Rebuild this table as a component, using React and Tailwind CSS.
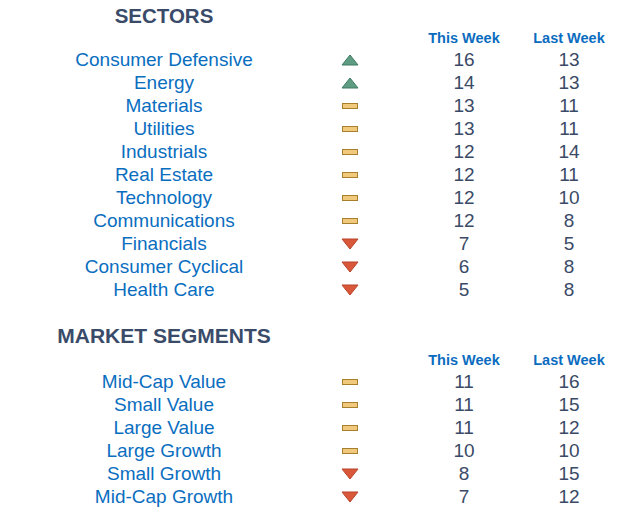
import React from "react";

const sectors = [
  ["Consumer Defensive", "up", 16, 13],
  ["Energy", "up", 14, 13],
  ["Materials", "flat", 13, 11],
  ["Utilities", "flat", 13, 11],
  ["Industrials", "flat", 12, 14],
  ["Real Estate", "flat", 12, 11],
  ["Technology", "flat", 12, 10],
  ["Communications", "flat", 12, 8],
  ["Financials", "down", 7, 5],
  ["Consumer Cyclical", "down", 6, 8],
  ["Health Care", "down", 5, 8],
];

const segments = [
  ["Mid-Cap Value", "flat", 11, 16],
  ["Small Value", "flat", 11, 15],
  ["Large Value", "flat", 11, 12],
  ["Large Growth", "flat", 10, 10],
  ["Small Growth", "down", 8, 15],
  ["Mid-Cap Growth", "down", 7, 12],
];

function Icon({ kind }) {
  if (kind === "up")
    return (
      <svg width="18" height="12" viewBox="0 0 18 12">
        <polygon points="9,1 17,11 1,11" fill="#5f9c84" stroke="#3f7a62" strokeWidth="1" strokeLinejoin="round" />
      </svg>
    );
  if (kind === "down")
    return (
      <svg width="18" height="12" viewBox="0 0 18 12">
        <polygon points="1,1 17,1 9,11" fill="#d9583a" stroke="#b8432a" strokeWidth="1" strokeLinejoin="round" />
      </svg>
    );
  return (
    <svg width="18" height="12" viewBox="0 0 18 12">
      <rect x="1.5" y="3.5" width="15" height="5" fill="#f0c97c" stroke="#a87f2c" strokeWidth="1" />
    </svg>
  );
}

function Section({ title, rows, titleClass }) {
  return (
    <div className="flex flex-col">
      <div className="grid grid-cols-[328px_84px_104px_106px]">
        <div className={`text-center font-bold text-[#3a4b6a] ${titleClass}`}>{title}</div>
      </div>
      <div className="grid grid-cols-[328px_84px_104px_106px] h-[19px] leading-[19px] text-[14.5px] font-bold text-[#0b6cbf]">
        <div />
        <div />
        <div className="text-center">This Week</div>
        <div className="text-center">Last Week</div>
      </div>
      {rows.map(([name, kind, a, b]) => (
        <div key={name} className="grid grid-cols-[328px_84px_104px_106px] h-[23px] leading-[23px] text-[19px]">
          <div className="text-center text-[#0a6ebf]">{name}</div>
          <div className="flex items-center justify-start pl-[13px]">
            <Icon kind={kind} />
          </div>
          <div className="text-center text-[#3a4a66]">{a}</div>
          <div className="text-center text-[#3a4a66]">{b}</div>
        </div>
      ))}
    </div>
  );
}

export default function App() {
  return (
    <div
      className="w-[638px] h-[518px] bg-white overflow-hidden pt-[4px]"
      style={{ fontFamily: '"Liberation Sans", Arial, sans-serif' }}
    >
      <Section title="SECTORS" rows={sectors} titleClass="text-[20.5px] leading-[24px] h-[25px]" />
      <div className="h-[23px]" />
      <Section title="MARKET SEGMENTS" rows={segments} titleClass="text-[21px] leading-[24px] h-[27px]" />
    </div>
  );
}
